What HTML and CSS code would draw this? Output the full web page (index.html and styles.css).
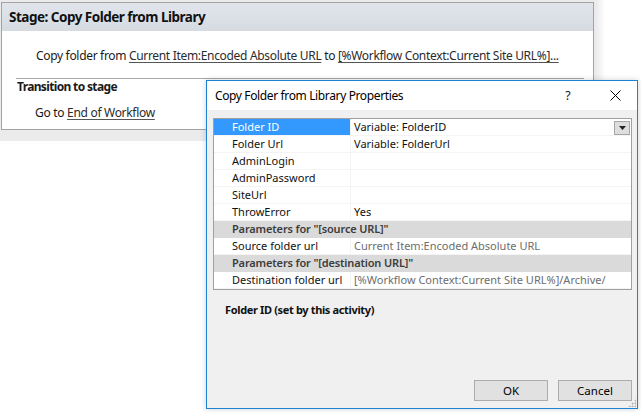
FILE: index.html
```html
<!DOCTYPE html>
<html>
<head>
<meta charset="utf-8">
<link rel="stylesheet" href="styles.css">
</head>
<body>
<div class="designer">
  <div class="stage">
    <div class="stage-head">Stage: Copy Folder from Library</div>
    <div class="stage-body">
      <div class="action">Copy folder from <span class="link">Current Item:Encoded Absolute URL</span> to <span class="link">[%Workflow Context:Current Site URL%]...</span></div>
    </div>
    <div class="transition">
      <div class="trans-title">Transition to stage</div>
      <div class="goto">Go to <span class="link">End of Workflow</span></div>
    </div>
  </div>
</div>

<div class="dialog">
  <div class="titlebar">
    <span class="title">Copy Folder from Library Properties</span>
    <span class="help">?</span>
    <span class="close"><svg width="11" height="11" viewBox="0 0 11 11"><path d="M0.5 0.5 L10.5 10.5 M10.5 0.5 L0.5 10.5" stroke="#000" stroke-width="1" fill="none"/></svg></span>
  </div>
  <div class="dlg-body">
    <div class="grid">
      <div class="row"><div class="lbl sel">Folder ID</div><div class="val dd">Variable: FolderID<span class="ddbtn"><svg width="7" height="4" viewBox="0 0 7 4"><path d="M0 0 H7 L3.5 4 Z" fill="#222"/></svg></span></div></div>
      <div class="row"><div class="lbl">Folder Url</div><div class="val">Variable: FolderUrl</div></div>
      <div class="row"><div class="lbl">AdminLogin</div><div class="val"></div></div>
      <div class="row"><div class="lbl">AdminPassword</div><div class="val"></div></div>
      <div class="row"><div class="lbl">SiteUrl</div><div class="val"></div></div>
      <div class="row"><div class="lbl">ThrowError</div><div class="val">Yes</div></div>
      <div class="row cat">Parameters for "[source URL]"</div>
      <div class="row"><div class="lbl">Source folder url</div><div class="val dim">Current Item:Encoded Absolute URL</div></div>
      <div class="row cat">Parameters for "[destination URL]"</div>
      <div class="row"><div class="lbl">Destination folder url</div><div class="val dim">[%Workflow Context:Current Site URL%]/Archive/</div></div>
    </div>
    <div class="desc">Folder ID (set by this activity)</div>
    <div class="buttons">
      <div class="btn">OK</div>
      <div class="btn">Cancel</div>
    </div>
    <div class="grip"></div>
  </div>
</div>
</body>
</html>
```

FILE: styles.css
```css
html, body {
  margin: 0;
  padding: 0;
  background: #ffffff;
}
body {
  font-family: "Noto Sans", "DejaVu Sans", sans-serif;
  color: #1a1a1a;
  width: 641px;
  height: 412px;
  overflow: hidden;
  position: relative;
}
.designer {
  width: 604px;
  height: 141px;
  box-sizing: border-box;
  padding: 2px 10px 11px 1px;
  background: linear-gradient(to right, #ebebeb 0, #ebebeb 596px, #f4f4f4 600px, #fbfbfb 604px);
}
.stage {
  width: 593px;
  height: 128px;
  box-sizing: border-box;
  border: 1px solid #a3a3a3;
  background: #fff;
}
.stage-head {
  height: 28px;
  background: linear-gradient(#e1e5eb, #d6dbe2);
  font-size: 13.5px;
  font-weight: 700;
  letter-spacing: -0.5px;
  line-height: 28px;
  padding-left: 7px;
  color: #111;
}
.stage-body {
  padding: 0 0 0 14px;
}
.action {
  height: 47px;
  line-height: 50px;
  font-size: 12px;
  letter-spacing: -0.32px;
  padding-left: 20px;
  margin-right: 9px;
  border-bottom: 1px solid #a8a8a8;
  white-space: nowrap;
}
.link {
  text-decoration: underline;
  text-decoration-color: #555;
  text-underline-offset: 2px;
  color: #2b2b2b;
}
.transition {
  padding-left: 15px;
}
.trans-title {
  font-size: 12px;
  font-weight: 700;
  letter-spacing: -0.65px;
  line-height: 16px;
}
.goto {
  font-size: 12px;
  letter-spacing: -0.3px;
  line-height: 16px;
  padding-top: 10px;
  padding-left: 18px;
}

.dialog {
  position: absolute;
  left: 206px;
  top: 80px;
  width: 432px;
  height: 329px;
  box-sizing: border-box;
  border: 1px solid #1883d7;
  background: #f0f0f0;
  display: flex;
  flex-direction: column;
  box-shadow: 0 0 6px rgba(0,0,0,0.18);
  font-size: 11px;
}
.titlebar {
  height: 29px;
  background: #fff;
  display: flex;
  align-items: center;
  padding-left: 8px;
  font-size: 12px;
}
.title {
  flex: 1;
  color: #000;
  letter-spacing: -0.37px;
}
.help {
  width: 10px;
  text-align: center;
  margin-right: 37px;
  font-size: 12.5px;
}
.close {
  width: 11px;
  height: 11px;
  margin-right: 16px;
  display: flex;
}
.dlg-body {
  flex: 1;
  display: flex;
  flex-direction: column;
  padding: 8px 5px 7px 6px;
  position: relative;
}
.grid {
  width: 419px;
  height: 172px;
  box-sizing: border-box;
  border: 1px solid #a0a0a0;
  background: #fff;
}
.row {
  height: 17px;
  display: flex;
  line-height: 16px;
  border-bottom: 1px solid #f4f4f4;
  box-sizing: border-box;
  white-space: nowrap;
}
.lbl {
  width: 137px;
  padding-left: 18px;
  box-sizing: border-box;
  border-right: 1px solid #f4f4f4;
  color: #111;
}
.lbl.sel {
  background: #3399ff;
  color: #fff;
}
.val {
  flex: 1;
  padding-left: 3px;
  color: #111;
}
.val.dim {
  color: #6d6d6d;
}
.val.dd {
  display: flex;
  align-items: center;
  justify-content: space-between;
}
.ddbtn {
  width: 16px;
  height: 14px;
  box-sizing: border-box;
  border: 1px solid #a6a6a6;
  background: #dedede;
  display: flex;
  align-items: center;
  justify-content: center;
  margin-right: 1px;
  margin-top: 1px;
}
.row.cat {
  background: #dadada;
  color: #3c3c3c;
  font-weight: 600;
  letter-spacing: -0.15px;
  padding-left: 18px;
  border-bottom-color: #dadada;
}
.desc {
  margin-top: 12px;
  padding-left: 12px;
  font-weight: 700;
  letter-spacing: -0.35px;
  line-height: 16px;
  color: #111;
}
.buttons {
  margin-top: auto;
  display: flex;
  justify-content: flex-end;
  gap: 10px;
}
.btn {
  width: 74px;
  height: 21px;
  box-sizing: border-box;
  border: 1px solid #adadad;
  background: #e1e1e1;
  text-align: center;
  line-height: 19px;
  font-size: 11.5px;
  color: #000;
}
.grip {
  position: absolute;
  right: 1px;
  bottom: 1px;
  width: 8px;
  height: 8px;
  background:
    radial-gradient(circle, #b0b0b0 0.9px, transparent 1.1px) 0 0 / 3px 3px;
  clip-path: polygon(100% 0, 100% 100%, 0 100%);
}
```
